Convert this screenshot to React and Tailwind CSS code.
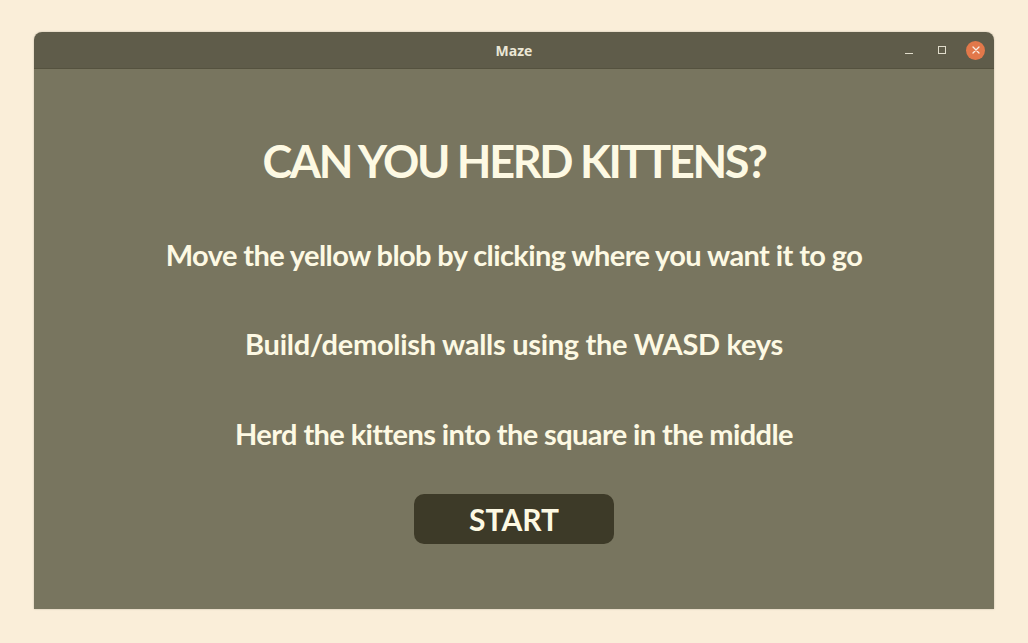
export default function App() {
  const font = { fontFamily: "Lato, 'Open Sans', sans-serif" };
  return (
    <div className="w-[1028px] h-[643px] bg-[#faeed9] pt-[32px] pl-[34px]" style={font}>
      <div className="w-[960px] flex flex-col rounded-t-[8px] overflow-hidden shadow-[0_0_2px_rgba(0,0,0,0.25)]">
        <div className="h-[37px] bg-[#5f5c4a] border-b border-[#55523f] flex items-center relative">
          <div className="flex-1 text-center text-[14px] font-bold text-[#ebe7d6] font-['Open_Sans',sans-serif]">Maze</div>
          <div className="absolute right-[9px] top-0 h-full flex items-center gap-[15px]">
            <div className="w-[18px] h-[18px] flex items-center justify-center">
              <div className="w-[8px] h-[1px] bg-[#e0dccb] mt-[6px]" />
            </div>
            <div className="w-[18px] h-[18px] flex items-center justify-center">
              <div className="w-[8px] h-[8px] border border-[#e0dccb]" />
            </div>
            <div className="w-[19px] h-[19px] rounded-full bg-[#e2784a] flex items-center justify-center">
              <svg width="10" height="10" viewBox="0 0 10 10">
                <path d="M2 2L8 8M8 2L2 8" stroke="#fbeee4" strokeWidth="1.3" strokeLinecap="round" />
              </svg>
            </div>
          </div>
        </div>
        <div className="h-[540px] bg-[#78755f] flex flex-col items-center text-[#fdf9e3] font-bold">
          <h1 className="mt-[62px] h-[60px] flex items-center text-[45px] leading-none tracking-[-2.3px]">CAN YOU HERD KITTENS?</h1>
          <p className="mt-[43px] h-[40px] flex items-center text-[29px] leading-none tracking-[-0.6px]">Move the yellow blob by clicking where you want it to go</p>
          <p className="mt-[49px] h-[40px] flex items-center text-[29px] leading-none tracking-[-0.3px]">Build/demolish walls using the WASD keys</p>
          <p className="mt-[50px] h-[40px] flex items-center text-[29px] leading-none tracking-[-0.6px]">Herd the kittens into the square in the middle</p>
          <button className="mt-[41px] w-[200px] h-[50px] rounded-[10px] bg-[#3d3a28] text-[#fdf9e3] text-[30px] font-bold leading-none">START</button>
        </div>
      </div>
    </div>
  );
}
